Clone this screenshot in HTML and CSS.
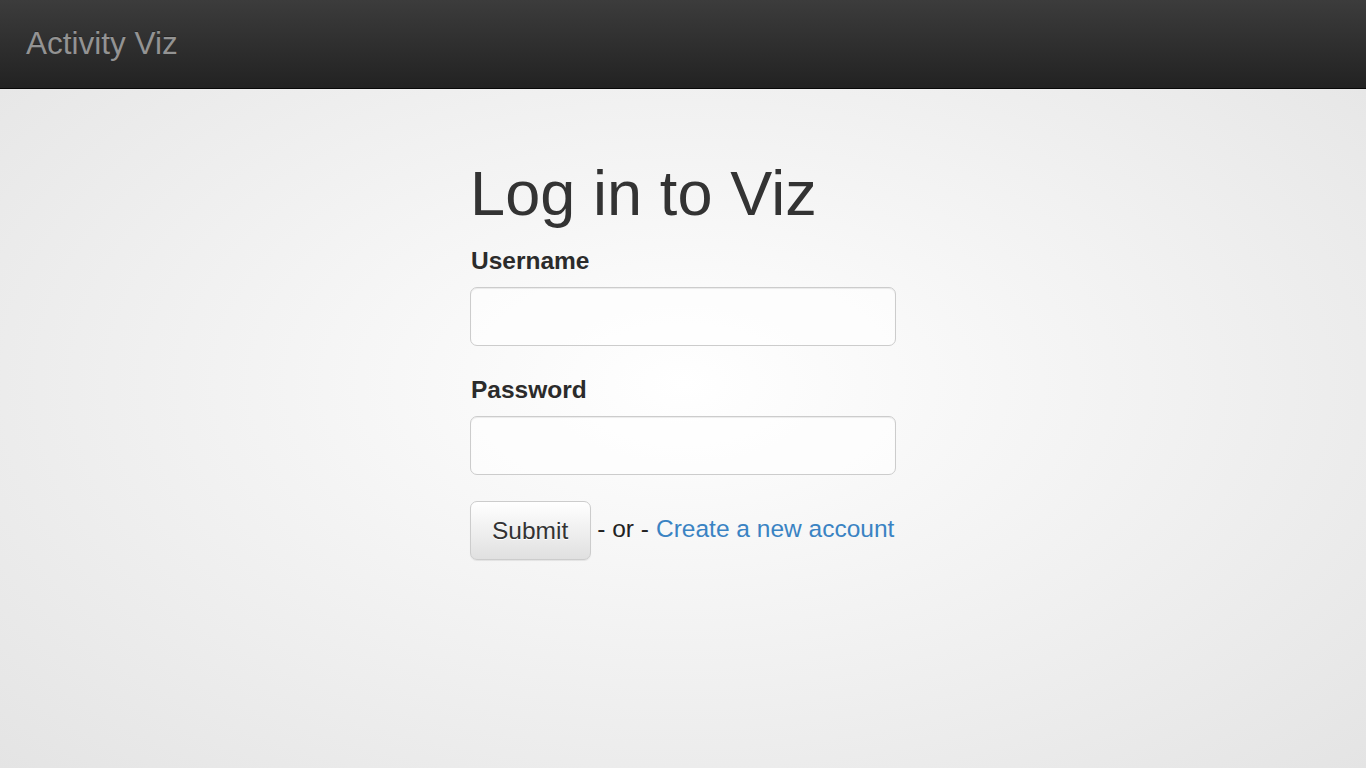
FILE: index.html
```html
<!DOCTYPE html>
<html>
<head>
<meta charset="utf-8">
<title>Log in to Viz</title>
<link rel="stylesheet" href="styles.css">
</head>
<body>
<nav class="navbar">
  <a class="brand" href="#">Activity Viz</a>
</nav>
<main class="container">
  <form class="login">
    <h1 class="title">Log in to Viz</h1>
    <div class="form-group">
      <label class="label" for="u">Username</label>
      <input class="input" id="u" type="text">
    </div>
    <div class="form-group">
      <label class="label" for="p">Password</label>
      <input class="input" id="p" type="password">
    </div>
    <div class="actions">
      <button class="btn" type="button">Submit</button>
      <span class="or">- or -</span>
      <a class="link" href="#">Create a new account</a>
    </div>
  </form>
</main>
</body>
</html>
```
FILE: styles.css
```css
* { box-sizing: border-box; }
html, body { margin: 0; padding: 0; height: 100%; }
body {
  font-family: "Liberation Sans", Arial, sans-serif;
  font-size: 24.5px;
  line-height: 1.42857;
  color: #333;
  background: radial-gradient(ellipse at 50% 50%, #ffffff 0%, #e4e4e4 100%);
  background-attachment: fixed;
  min-height: 768px;
}
.navbar {
  height: 89px;
  background: linear-gradient(to bottom, #3c3c3c 0%, #222 100%);
  border-bottom: 1.75px solid #080808;
  padding: 0 26px;
  display: flex;
}
.brand {
  display: block;
  padding: 26px 0;
  font-size: 31.5px;
  line-height: 35px;
  color: #939393;
  text-decoration: none;
  text-shadow: 0 -1px 0 rgba(0,0,0,.25);
}
.container {
  display: flex;
  justify-content: center;
  padding-top: 35px;
}
.login { width: 426px; }
.title {
  margin: 35px 0 14.5px;
  font-size: 63px;
  line-height: 1.1;
  font-weight: 500;
  color: #333;
  letter-spacing: 0.1px;
}
.form-group { margin-bottom: 26px; }
.label {
  display: block;
  font-weight: bold;
  margin-bottom: 8.75px;
  line-height: 35px;
  color: #2b2b2b;
  padding-left: 1px;
}
.input {
  display: block;
  width: 100%;
  height: 59.5px;
  border: 1.75px solid #ccc;
  border-radius: 7px;
  background: rgba(255,255,255,0.6);
  box-shadow: inset 0 1px 1px rgba(0,0,0,.075);
  font-size: 24.5px;
  padding: 10px 21px;
}
.actions {
  display: flex;
  align-items: center;
}
.btn {
  height: 59px;
  padding: 0 22px 0 21px;
  font-family: "Liberation Sans", Arial, sans-serif;
  font-size: 24.5px;
  color: #333;
  background: linear-gradient(to bottom, #fff 0%, #e0e0e0 100%);
  border: 1.75px solid #ccc;
  border-radius: 7px;
  box-shadow: inset 0 1px 0 rgba(255,255,255,.15), 0 1px 1px rgba(0,0,0,.075);
  text-shadow: 0 1px 0 #fff;
  margin-right: 6px;
}
.or { margin-right: 7px; margin-top: -3px; color: #222; }
.link { color: #3a83c3; text-decoration: none; margin-top: -3px; }
```
